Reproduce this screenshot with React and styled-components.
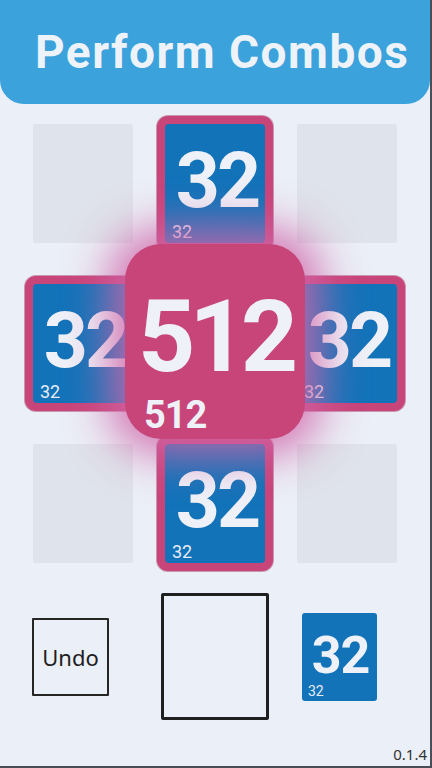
import React from "react";
import styled, { createGlobalStyle } from "styled-components";

const Global = createGlobalStyle`
  html, body { margin: 0; padding: 0; background: #ebeff7; }
  * { box-sizing: border-box; }
`;

const Page = styled.div`
  width: 432px;
  height: 768px;
  display: flex;
  flex-direction: column;
  background: #ebeff7;
  border-right: 2px solid #4a4e57;
  border-bottom: 2px solid #4a4e57;
  overflow: hidden;
`;

const Header = styled.header`
  height: 104px;
  background: #3ba2dc;
  border-radius: 0 0 24px 24px;
  padding: 29px 0 0 35px;
`;

const Title = styled.h1`
  margin: 0;
  font-family: Roboto, "Noto Sans", sans-serif;
  font-weight: 700;
  font-size: 46px;
  line-height: 1;
  letter-spacing: 1.5px;
  color: #eef3f9;
  white-space: nowrap;
`;

const Board = styled.div`
  margin: 20px 0 0 33px;
  display: grid;
  grid-template-columns: repeat(3, 100px);
  grid-template-rows: repeat(3, 119px);
  column-gap: 32px;
  row-gap: 41px;
`;

const EmptyCell = styled.div`
  background: #dfe3eb;
  border-radius: 2px;
`;

const Tile = styled.div`
  margin: -8px;
  border: 8px solid #c8457a;
  border-radius: 11px;
  box-shadow: 0 0 0 1px rgba(160, 45, 95, 0.45);
  background: #c8457a;
  display: flex;
`;

const TileFace = styled.div`
  flex: 1;
  background: #1273b9;
  border-radius: 4px;
  display: flex;
  flex-direction: column;
  padding: 19px 0 2px 7px;
`;

const BigNum = styled.div`
  align-self: center;
  font-family: Roboto, "Noto Sans", sans-serif;
  font-weight: 700;
  font-size: ${(p) => p.$size}px;
  line-height: 1;
  letter-spacing: ${(p) => p.$ls}px;
  color: #eef1f8;
  margin-left: ${(p) => p.$shift || 0}px;
`;

const SmallNum = styled.div`
  margin-top: auto;
  font-family: Roboto, "Noto Sans", sans-serif;
  font-weight: 400;
  font-size: ${(p) => p.$size}px;
  line-height: 1;
  color: #e8ecf6;
`;

const Combo = styled.div`
  position: relative;
  z-index: 2;
  margin: -40px -40px -36px -40px;
  background: #c8457a;
  border-radius: 36px;
  box-shadow: 0 0 44px 16px rgba(208, 102, 170, 0.88);
  display: flex;
  flex-direction: column;
  padding: 43px 0 0 19px;
`;

const ComboBig = styled(BigNum)`
  margin-left: -19px;
`;

const ComboSmall = styled.div`
  margin-top: 9px;
  font-family: Roboto, "Noto Sans", sans-serif;
  font-weight: 700;
  font-size: 38px;
  line-height: 1;
  letter-spacing: -1px;
  color: #eef1f8;
`;

const Controls = styled.div`
  margin-top: 30px;
  padding-left: 32px;
  display: flex;
  align-items: center;
`;

const UndoButton = styled.button`
  width: 77px;
  height: 78px;
  padding: 0;
  background: transparent;
  border: 2px solid #262626;
  border-radius: 1px;
  font-family: "Noto Sans", sans-serif;
  font-size: 22px;
  color: #1e1e1e;
`;

const Slot = styled.div`
  width: 108px;
  height: 127px;
  margin-left: 52px;
  border: 3px solid #1f1f1f;
  border-radius: 2px;
`;

const NextTile = styled.div`
  width: 75px;
  height: 88px;
  margin-left: 33px;
  background: #1273b9;
  border-radius: 3px;
  display: flex;
  flex-direction: column;
  padding: 17px 0 3px 6px;
`;

const Footer = styled.div`
  margin-top: auto;
  padding: 0 3px 4px 0;
  text-align: right;
  font-family: "Noto Sans", sans-serif;
  font-size: 15px;
  line-height: 1;
  color: #333;
`;

function NumberTile({ value }) {
  return (
    <Tile>
      <TileFace>
        <BigNum $size={77} $ls={-3} $shift={-3}>{value}</BigNum>
        <SmallNum $size={18}>{value}</SmallNum>
      </TileFace>
    </Tile>
  );
}

export default function App() {
  return (
    <>
      <Global />
      <Page>
        <Header>
          <Title>Perform Combos</Title>
        </Header>
        <Board>
          <EmptyCell />
          <NumberTile value="32" />
          <EmptyCell />
          <NumberTile value="32" />
          <Combo>
            <ComboBig $size={100} $ls={-6}>512</ComboBig>
            <ComboSmall>512</ComboSmall>
          </Combo>
          <NumberTile value="32" />
          <EmptyCell />
          <NumberTile value="32" />
          <EmptyCell />
        </Board>
        <Controls>
          <UndoButton>Undo</UndoButton>
          <Slot />
          <NextTile>
            <BigNum $size={52} $ls={-1} $shift={-4}>32</BigNum>
            <SmallNum $size={14}>32</SmallNum>
          </NextTile>
        </Controls>
        <Footer>0.1.4</Footer>
      </Page>
    </>
  );
}
